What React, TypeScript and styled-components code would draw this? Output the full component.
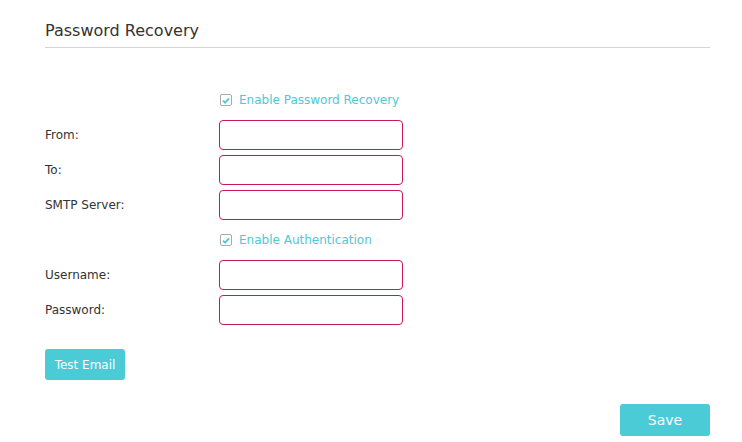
import React, { useState } from "react";
import styled, { createGlobalStyle } from "styled-components";

const GlobalStyle = createGlobalStyle`
  html, body {
    margin: 0;
    padding: 0;
    background: #ffffff;
  }
  body {
    font-family: "DejaVu Sans", Verdana, sans-serif;
    color: #333333;
  }
`;

const Page = styled.div`
  width: 665px;
  padding-left: 45px;
`;

const Title = styled.h2`
  margin: 0;
  padding: 21px 0 6px;
  font-size: 16px;
  line-height: 20px;
  font-weight: normal;
  color: #333333;
  border-bottom: 1px solid #d4d4d4;
`;

const Form = styled.div`
  display: grid;
  grid-template-columns: 174px 184px;
  grid-auto-rows: 30px;
  row-gap: 5px;
  margin-top: 37px;
`;

const Label = styled.label`
  grid-column: 1;
  display: flex;
  align-items: center;
  font-size: 12px;
  color: #333333;
`;

const Input = styled.input`
  grid-column: 2;
  box-sizing: border-box;
  width: 184px;
  height: 30px;
  border: 1px solid #c8175e;
  border-radius: 4px;
  padding: 0 8px;
  outline: none;
  font-family: inherit;
  font-size: 12px;
`;

const CheckRow = styled.label`
  grid-column: 2 / span 1;
  display: flex;
  align-items: center;
  gap: 7px;
  padding-left: 1px;
  font-size: 12px;
  color: #4acbd6;
  white-space: nowrap;
  cursor: pointer;
`;

const Box = styled.span`
  box-sizing: border-box;
  width: 12px;
  height: 12px;
  border: 1px solid #a9a9a9;
  border-radius: 2px;
  display: flex;
  align-items: center;
  justify-content: center;
  background: #fff;
`;

const Button = styled.button<{ $w: number; $h: number; $size: number }>`
  width: ${(p) => p.$w}px;
  height: ${(p) => p.$h}px;
  border: none;
  border-radius: 3px;
  background: #4acbd6;
  color: #ffffff;
  font-family: inherit;
  font-size: ${(p) => p.$size}px;
  padding: 0;
  cursor: pointer;
`;

const TestRow = styled.div`
  margin-top: 24px;
`;

const SaveRow = styled.div`
  display: flex;
  justify-content: flex-end;
  margin-top: 24px;
`;

const Check: React.FC<{ label: string }> = ({ label }) => {
  const [on, setOn] = useState(true);
  return (
    <>
      <span />
      <CheckRow onClick={() => setOn(!on)}>
        <Box>
          {on && (
            <svg width="8" height="7" viewBox="0 0 8 7">
              <path
                d="M1 3.6 L3.1 5.6 L7 1.3"
                fill="none"
                stroke="#4acbd6"
                strokeWidth="1.8"
              />
            </svg>
          )}
        </Box>
        {label}
      </CheckRow>
    </>
  );
};

const Field: React.FC<{ label: string; type?: string }> = ({ label, type }) => (
  <>
    <Label>{label}</Label>
    <Input type={type || "text"} />
  </>
);

export default function App() {
  return (
    <Page>
      <GlobalStyle />
      <Title>Password Recovery</Title>
      <Form>
        <Check label="Enable Password Recovery" />
        <Field label="From:" />
        <Field label="To:" />
        <Field label="SMTP Server:" />
        <Check label="Enable Authentication" />
        <Field label="Username:" />
        <Field label="Password:" type="password" />
      </Form>
      <TestRow>
        <Button $w={80} $h={31} $size={12}>
          Test Email
        </Button>
      </TestRow>
      <SaveRow>
        <Button $w={90} $h={32} $size={14}>
          Save
        </Button>
      </SaveRow>
    </Page>
  );
}
